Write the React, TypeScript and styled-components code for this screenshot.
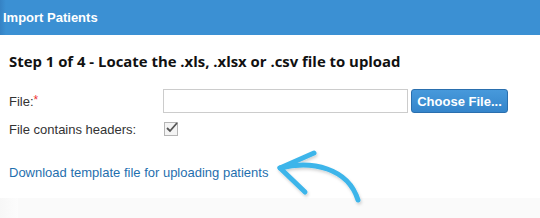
import styled, { createGlobalStyle } from "styled-components";

const GlobalStyle = createGlobalStyle`
  html, body { margin: 0; padding: 0; background: #fafafa; }
  body { font-family: "Liberation Sans", Arial, sans-serif; width: 540px; height: 218px; overflow: hidden; }
`;

const Frame = styled.div`
  width: 540px;
  height: 218px;
  display: flex;
  flex-direction: column;
  background: #fafafa;
`;

const Header = styled.div`
  height: 35px;
  background: linear-gradient(to right, #3582c4 0px, #3b90d3 6px, #3b90d3 100%);
  color: #fff;
  font-weight: bold;
  font-size: 13px;
  padding: 10px 0 0 3px;
  box-sizing: border-box;
`;

const Body = styled.div`
  flex: 1;
  display: flex;
`;

const Gutter = styled.div`
  width: 18px;
  background: linear-gradient(to right, #f7f7f7, #fcfcfc);
`;

const Panel = styled.div`
  flex: 1;
  background: #fff;
  height: 163px;
  position: relative;
  margin-left: -18px;
  padding-left: 9px;
`;

const StepTitle = styled.h2`
  margin: 0;
  padding-top: 16px;
  font-family: "Open Sans", "Liberation Sans", sans-serif;
  font-weight: bold;
  font-size: 14.9px;
  color: #111;
`;

const Row = styled.div<{ $top: number }>`
  display: flex;
  align-items: center;
  margin-top: ${(p) => p.$top}px;
  height: 24px;
`;

const Label = styled.div`
  width: 154px;
  font-size: 13px;
  color: #333;
`;

const Req = styled.span`
  color: #e33;
  vertical-align: 2px;
  font-size: 12px;
`;

const TextBox = styled.div`
  width: 243px;
  height: 22px;
  border: 1px solid #ccc;
  background: #fff;
`;

const Button = styled.button`
  margin-left: 3px;
  height: 24px;
  width: 97px;
  border: 1px solid #2a6fae;
  border-radius: 3px;
  background: linear-gradient(#4799db, #3485cb);
  color: #fff;
  font-family: "Liberation Sans", Arial, sans-serif;
  font-weight: bold;
  font-size: 13px;
  padding: 0;
`;

const Check = styled.div`
  width: 12px;
  height: 12px;
  border: 1px solid #b5b5b5;
  background: #f4f4f4;
  margin-left: 1px;
  position: relative;
  svg { position: absolute; left: 0; top: -3px; }
`;

const Link = styled.a`
  display: block;
  margin-top: 24px;
  font-size: 13px;
  color: #1f6fae;
  text-decoration: none;
`;

const Arrow = styled.svg`
  position: absolute;
  left: 0;
  top: 0;
  pointer-events: none;
`;

export default function App() {
  return (
    <>
      <GlobalStyle />
      <Frame>
        <Header>Import Patients</Header>
        <Body>
          <Gutter />
          <Panel>
            <StepTitle>Step 1 of 4 - Locate the .xls, .xlsx or .csv file to upload</StepTitle>
            <Row $top={18}>
              <Label>
                File:<Req>*</Req>
              </Label>
              <TextBox />
              <Button>Choose File...</Button>
            </Row>
            <Row $top={4}>
              <Label>File contains headers:</Label>
              <Check>
                <svg width="14" height="14" viewBox="0 0 14 14">
                  <path d="M2 8 L5 11 L12 3" fill="none" stroke="#555" strokeWidth="1.8" />
                </svg>
              </Check>
            </Row>
            <Link href="#">Download template file for uploading patients</Link>
            <Arrow width="540" height="183" viewBox="0 35 540 183">
              <defs>
                <filter id="sh" x="-20%" y="-20%" width="140%" height="140%">
                  <feDropShadow dx="1" dy="2" stdDeviation="1.5" floodColor="#000" floodOpacity="0.18" />
                </filter>
              </defs>
              <g filter="url(#sh)" fill="none" stroke="#3db5ea" strokeWidth="5" strokeLinecap="round" strokeLinejoin="round">
                <path d="M280 168 C 312 160, 348 168, 358 200" />
                <path d="M314 153 L280 168 L305 192" />
              </g>
            </Arrow>
          </Panel>
        </Body>
      </Frame>
    </>
  );
}
